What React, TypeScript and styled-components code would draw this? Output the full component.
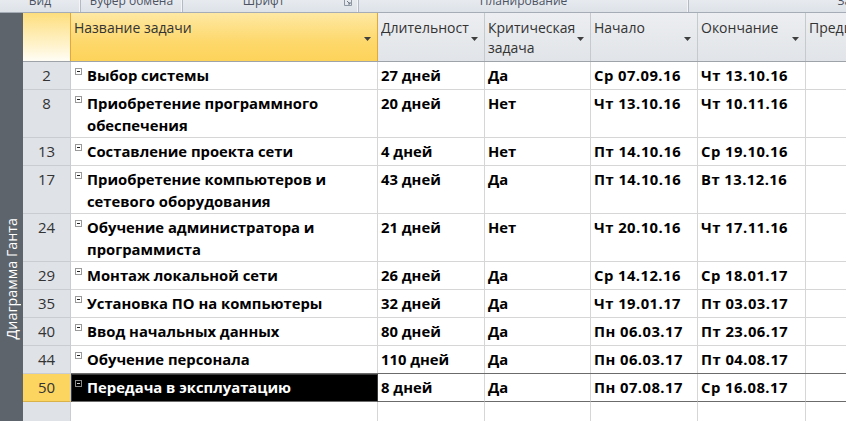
import React from 'react';
import styled, { createGlobalStyle, css } from 'styled-components';

const COLS = '48px 307px 107px 106px 107px 108px 140px';
const FONT = '"Open Sans", "Noto Sans", "DejaVu Sans", sans-serif';

const GlobalStyle = createGlobalStyle`
  html, body { margin: 0; padding: 0; background: #fff; }
  body { width: 846px; height: 421px; overflow: hidden; font-family: ${FONT}; }
`;

const Page = styled.div`
  width: 846px;
  height: 421px;
  display: flex;
  flex-direction: column;
  overflow: hidden;
  background: #fff;
`;

const Ribbon = styled.div`
  height: 13px;
  flex: none;
  display: flex;
  box-sizing: border-box;
  background: linear-gradient(#e7ebf0, #dde2e8);
  border-bottom: 1px solid #a5acb6;
  overflow: hidden;
`;

const RibbonGroup = styled.div<{ $w: number }>`
  flex: none;
  width: ${(p) => p.$w}px;
  box-sizing: border-box;
  display: grid;
  grid-template-columns: 1fr auto;
  border-right: 1px solid #b3bac3;
  box-shadow: inset -1px 0 0 #f3f5f8;
`;

const RibbonLabel = styled.span<{ $shift?: number }>`
  justify-self: center;
  font-size: 12px;
  line-height: 12px;
  margin-top: -5px;
  margin-left: ${(p) => p.$shift ?? 0}px;
  color: #4b5262;
  white-space: nowrap;
`;

const Launcher = styled.svg`
  width: 8px;
  height: 6px;
  margin-right: 6px;
`;

const Body = styled.div`
  flex: 1;
  display: flex;
  min-height: 0;
`;

const Sidebar = styled.div`
  width: 23px;
  flex: none;
  box-sizing: border-box;
  background: #5e646c;
  display: flex;
  flex-direction: column;
  justify-content: flex-end;
  align-items: center;
  padding-bottom: 82px;
`;

const SideLabel = styled.span`
  writing-mode: vertical-rl;
  transform: rotate(180deg);
  color: #ffffff;
  font-size: 14.3px;
  white-space: nowrap;
`;

const Table = styled.div`
  flex: 1;
  min-width: 0;
  display: flex;
  flex-direction: column;
  overflow: hidden;
`;

const HeaderRow = styled.div`
  display: grid;
  grid-template-columns: ${COLS};
  height: 49px;
  flex: none;
  box-sizing: border-box;
  border-bottom: 1px solid #9ea3a9;
`;

const HeaderCell = styled.div<{ $active?: boolean }>`
  box-sizing: border-box;
  display: flex;
  align-items: flex-start;
  gap: 2px;
  padding: 5px 6px 0 3px;
  font-size: 14px;
  line-height: 20px;
  color: #333;
  border-right: 1px solid #c6cace;
  background: linear-gradient(#eceef1, #e1e4e8);
  overflow: hidden;
  ${(p) =>
    p.$active &&
    css`
      background: linear-gradient(#fee8a3 0%, #fdd86b 60%, #fdd35a 100%);
      border-right-color: #e2a93a;
    `}
`;

const CornerCell = styled.div`
  box-sizing: border-box;
  border-right: 1px solid #e2a93a;
  background: linear-gradient(#fdde7e, #fff4cf 70%, #fffdf6);
`;

const HeaderText = styled.span`
  flex: 1;
  min-width: 0;
  overflow: hidden;
  white-space: nowrap;
`;

const Arrow = styled.svg`
  flex: none;
  width: 7px;
  height: 4px;
  margin-top: 19px;
`;

const Row = styled.div<{ $h: number }>`
  display: grid;
  grid-template-columns: ${COLS};
  height: ${(p) => p.$h}px;
  flex: none;
`;

const Cell = styled.div<{ $sel?: boolean; $wide?: boolean }>`
  box-sizing: border-box;
  padding: 2px 3px 0;
  border-right: 1px solid #d6d6d6;
  border-bottom: 1px solid #d6d6d6;
  font-size: 14.8px;
  font-weight: 700;
  line-height: 22px;
  letter-spacing: ${(p) => (p.$wide ? '0.45px' : '0')};
  color: #000;
  white-space: nowrap;
  overflow: hidden;
  ${(p) =>
    p.$sel &&
    css`
      border-bottom-color: #6b6b6b;
      box-shadow: 0 -1px 0 #6b6b6b;
    `}
`;

const NumCell = styled.div<{ $sel?: boolean }>`
  box-sizing: border-box;
  padding-top: 2px;
  text-align: center;
  font-size: 15px;
  line-height: 22px;
  color: #333;
  background: #dfe2e7;
  border-right: 1px solid #c9cdd2;
  border-bottom: 1px solid #c9cdd2;
  ${(p) =>
    p.$sel &&
    css`
      background: #fcd560;
      border-bottom-color: #d9b24a;
    `}
`;

const NameCell = styled(Cell)`
  display: flex;
  align-items: flex-start;
  padding-left: 4px;
  ${(p) =>
    p.$sel &&
    css`
      background: #000;
      color: #fff;
      border: 1px solid #3a3a3a;
      border-bottom-color: #6b6b6b;
      padding-top: 1px;
      padding-left: 3px;
    `}
`;

const Toggle = styled.svg`
  flex: none;
  width: 7px;
  height: 7px;
  margin: 4px 5px 0 0;
`;

const EmptyRow = styled.div`
  flex: 1;
  display: grid;
  grid-template-columns: ${COLS};
`;

const EmptyCell = styled.div<{ $num?: boolean }>`
  box-sizing: border-box;
  border-right: 1px solid ${(p) => (p.$num ? '#c9cdd2' : '#d6d6d6')};
  background: ${(p) => (p.$num ? '#dfe2e7' : '#fff')};
`;

type Task = {
  id: number;
  name: string[];
  dur: string;
  crit: string;
  start: string;
  end: string;
  sel?: boolean;
};

const tasks: Task[] = [
  { id: 2, name: ['Выбор системы'], dur: '27 дней', crit: 'Да', start: 'Ср 07.09.16', end: 'Чт 13.10.16' },
  { id: 8, name: ['Приобретение программного', 'обеспечения'], dur: '20 дней', crit: 'Нет', start: 'Чт 13.10.16', end: 'Чт 10.11.16' },
  { id: 13, name: ['Составление проекта сети'], dur: '4 дней', crit: 'Нет', start: 'Пт 14.10.16', end: 'Ср 19.10.16' },
  { id: 17, name: ['Приобретение компьютеров и', 'сетевого оборудования'], dur: '43 дней', crit: 'Да', start: 'Пт 14.10.16', end: 'Вт 13.12.16' },
  { id: 24, name: ['Обучение администратора и', 'программиста'], dur: '21 дней', crit: 'Нет', start: 'Чт 20.10.16', end: 'Чт 17.11.16' },
  { id: 29, name: ['Монтаж локальной сети'], dur: '26 дней', crit: 'Да', start: 'Ср 14.12.16', end: 'Ср 18.01.17' },
  { id: 35, name: ['Установка ПО на компьютеры'], dur: '32 дней', crit: 'Да', start: 'Чт 19.01.17', end: 'Пт 03.03.17' },
  { id: 40, name: ['Ввод начальных данных'], dur: '80 дней', crit: 'Да', start: 'Пн 06.03.17', end: 'Пт 23.06.17' },
  { id: 44, name: ['Обучение персонала'], dur: '110 дней', crit: 'Да', start: 'Пн 06.03.17', end: 'Пт 04.08.17' },
  { id: 50, name: ['Передача в эксплуатацию'], dur: '8 дней', crit: 'Да', start: 'Пн 07.08.17', end: 'Ср 16.08.17', sel: true },
];

const headers: { lines: string[]; active?: boolean }[] = [
  { lines: ['Название задачи'], active: true },
  { lines: ['Длительность'] },
  { lines: ['Критическая', 'задача'] },
  { lines: ['Начало'] },
  { lines: ['Окончание'] },
  { lines: ['Предшественники'] },
];

const ribbonGroups = [
  { w: 81, label: 'Вид' },
  { w: 102, label: 'Буфер обмена' },
  { w: 176, label: 'Шрифт', launcher: true },
  { w: 330, label: 'Планирование' },
  { w: 330, label: 'Задачи' },
];

const DropArrow = () => (
  <Arrow viewBox="0 0 7 4">
    <path d="M0 0H7L3.5 4Z" fill="#3f3f3f" />
  </Arrow>
);

const MinusBox = ({ inv }: { inv?: boolean }) => (
  <Toggle viewBox="0 0 7 7">
    <rect x="0.5" y="0.5" width="6" height="6" fill={inv ? '#000' : '#fff'} stroke={inv ? '#8a8a8a' : '#9a9a9a'} />
    <path d="M2 3.5H5" stroke={inv ? '#d0d0d0' : '#222'} strokeWidth="1" />
  </Toggle>
);

export default function App() {
  return (
    <Page>
      <GlobalStyle />
      <Ribbon>
        {ribbonGroups.map((g) => (
          <RibbonGroup key={g.label} $w={g.w}>
            <RibbonLabel $shift={g.label === 'Задачи' ? 10 : 0}>{g.label}</RibbonLabel>
            {g.launcher ? (
              <Launcher viewBox="0 0 8 6">
                <path d="M0.5 0V5.5H7.5V0" fill="none" stroke="#8d96a3" />
                <path d="M3 1L6 4M6 2V4H4" fill="none" stroke="#6c7684" />
              </Launcher>
            ) : (
              <span />
            )}
          </RibbonGroup>
        ))}
      </Ribbon>
      <Body>
        <Sidebar>
          <SideLabel>Диаграмма Ганта</SideLabel>
        </Sidebar>
        <Table>
          <HeaderRow>
            <CornerCell />
            {headers.map((h) => (
              <HeaderCell key={h.lines[0]} $active={h.active}>
                <HeaderText>
                  {h.lines.map((l, i) => (
                    <React.Fragment key={l}>
                      {i > 0 && <br />}
                      {l}
                    </React.Fragment>
                  ))}
                </HeaderText>
                <DropArrow />
              </HeaderCell>
            ))}
          </HeaderRow>
          {tasks.map((t) => (
            <Row key={t.id} $h={t.name.length > 1 ? 48 : 28}>
              <NumCell $sel={t.sel}>{t.id}</NumCell>
              <NameCell $sel={t.sel}>
                <MinusBox inv={t.sel} />
                <span>
                  {t.name.map((l, i) => (
                    <React.Fragment key={l}>
                      {i > 0 && <br />}
                      {l}
                    </React.Fragment>
                  ))}
                </span>
              </NameCell>
              <Cell $sel={t.sel}>{t.dur}</Cell>
              <Cell $sel={t.sel}>{t.crit}</Cell>
              <Cell $sel={t.sel} $wide>{t.start}</Cell>
              <Cell $sel={t.sel} $wide>{t.end}</Cell>
              <Cell $sel={t.sel} />
            </Row>
          ))}
          <EmptyRow>
            <EmptyCell $num />
            <EmptyCell />
            <EmptyCell />
            <EmptyCell />
            <EmptyCell />
            <EmptyCell />
            <EmptyCell />
          </EmptyRow>
        </Table>
      </Body>
    </Page>
  );
}
